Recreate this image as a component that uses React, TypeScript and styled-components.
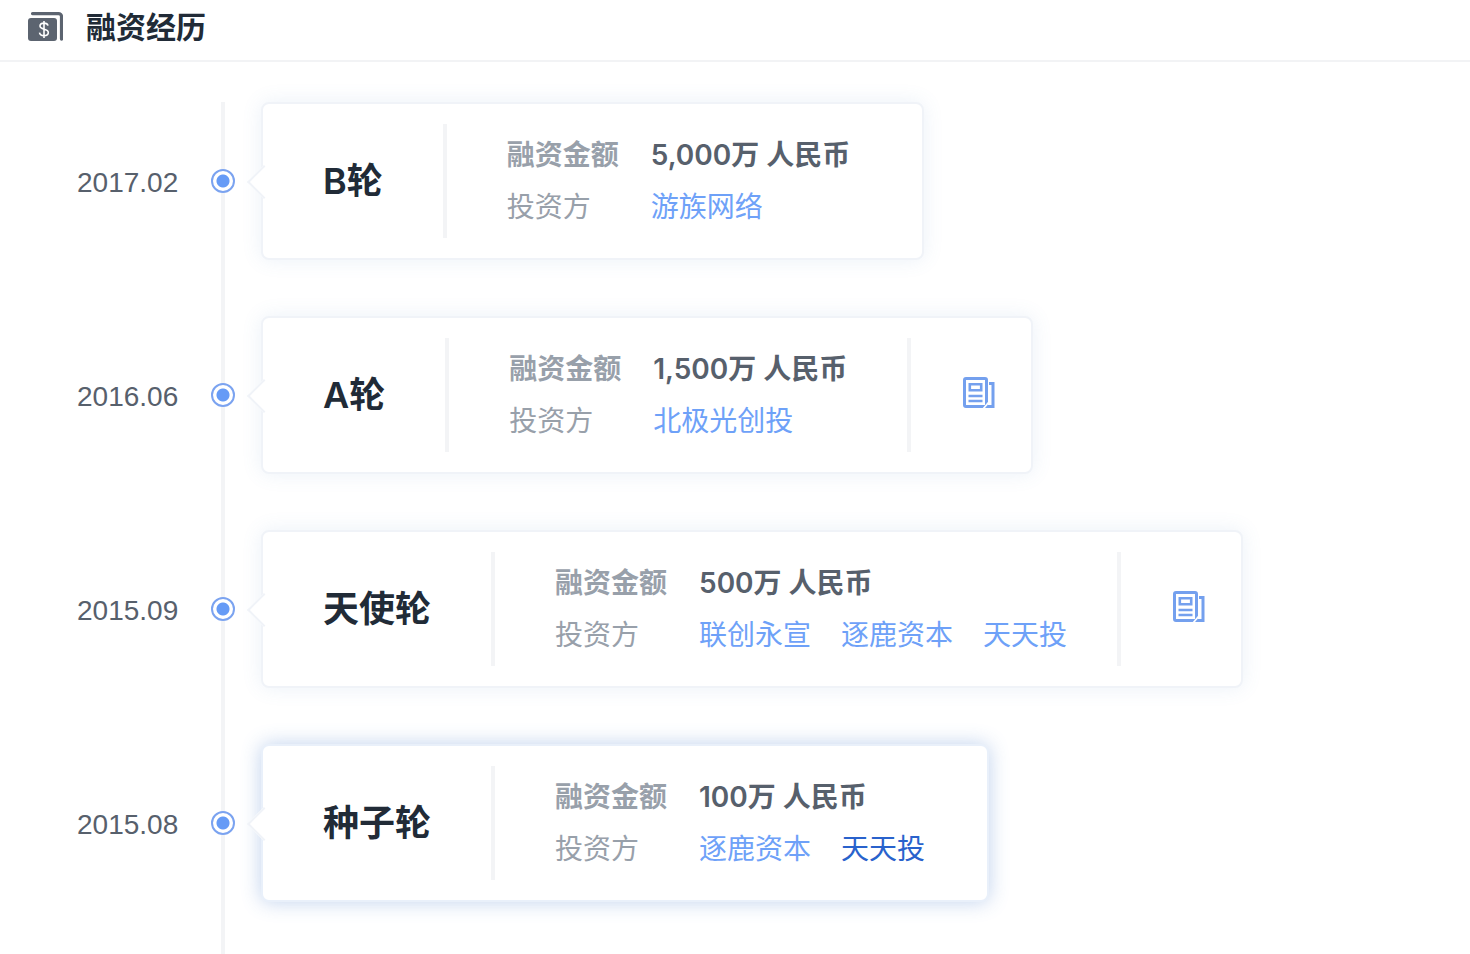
import React from "react";
import styled, { createGlobalStyle, css } from "styled-components";

const GlobalStyle = createGlobalStyle`
  * { box-sizing: border-box; }
  body {
    margin: 0;
    background: #fff;
    color: #57606c;
    font-family: Inter, "Noto Sans CJK SC", sans-serif;
    font-size: 28px;
    line-height: 52px;
  }
`;

const Header = styled.header`
  display: flex;
  align-items: center;
  gap: 23px;
  height: 62px;
  padding: 0 28px 6px;
  border-bottom: 2px solid #f2f3f5;
`;

const Title = styled.h1`
  margin: 0;
  color: #212b37;
  font-size: 30px;
  line-height: 44px;
  font-weight: 700;
`;

const Timeline = styled.ol`
  list-style: none;
  margin: 0;
  padding: 40px 0 0;
`;

const Round = styled.li`
  display: grid;
  grid-template-columns: 211px 24px auto;
  justify-content: start;
  padding-bottom: 56px;

  &:last-child {
    padding-bottom: 52px;
  }
`;

const RoundDate = styled.time`
  align-self: center;
  padding: 4px 0 0 77px;
  font-family: "Liberation Sans", Arial, sans-serif;
`;

const Rail = styled.div`
  display: flex;
  align-items: center;
  justify-content: center;
  margin-bottom: -56px;
  padding-bottom: 56px;
  background: linear-gradient(#f3f4f6, #f3f4f6) center / 4px 100% no-repeat;

  ${Round}:last-child & {
    margin-bottom: -52px;
    padding-bottom: 52px;
  }
`;

const Dot = styled.span`
  width: 24px;
  height: 24px;
  border: 2px solid #7ba3f0;
  border-radius: 50%;
  background: radial-gradient(circle, #669bf6 0 6px, #fff 7px);
`;

const Card = styled.article<{ $active?: boolean }>`
  position: relative;
  display: flex;
  min-height: 158px;
  margin-left: 26px;
  padding: 20px 0 20px 60px;
  border: 2px solid #f0f3f8;
  border-radius: 8px;
  background: #fff;
  box-shadow: 0 0 20px rgba(90, 140, 200, 0.12);

  &::before {
    content: "";
    position: absolute;
    top: calc(50% - 11px);
    left: -11px;
    width: 22px;
    height: 22px;
    border: solid #f0f3f8;
    border-width: 0 0 2px 2px;
    background: #fff;
    transform: rotate(45deg);
  }

  ${(p) =>
    p.$active &&
    css`
      border-color: #e9f0fa;
      box-shadow: 0 0 20px rgba(60, 115, 200, 0.32);
    `}
`;

const Stage = styled.h2`
  display: flex;
  align-items: center;
  margin: 0;
  padding-right: 60px;
  color: #212b37;
  font-size: 36px;
  font-weight: 600;
  white-space: nowrap;
`;

const Details = styled.dl<{ $divided: boolean }>`
  display: grid;
  grid-template-columns: 144px auto;
  align-content: center;
  margin: 0;
  margin-right: ${(p) => (p.$divided ? 0 : 12)}px;
  padding-left: 60px;
  border-left: 4px solid #f3f4f6;
  white-space: nowrap;
`;

const Label = styled.dt<{ $strong?: boolean }>`
  color: #98a0aa;
  font-weight: ${(p) => (p.$strong ? 700 : 400)};
`;

const Amount = styled.dd`
  margin: 0;
  padding-right: 60px;
  font-weight: 600;
`;

const Investors = styled.dd`
  display: flex;
  gap: 30px;
  margin: 0;
  padding-right: 50px;
`;

const Investor = styled.a<{ $active?: boolean }>`
  color: ${(p) => (p.$active ? "#2962cc" : "#6ea1f8")};
  text-decoration: none;

  &:hover {
    color: #2962cc;
  }
`;

const NewsLink = styled.a`
  display: flex;
  align-items: center;
  padding: 0 35px 4px 51px;
  border-left: 4px solid #f3f4f6;
  color: #74a0ee;
`;

function MoneyIcon() {
  return (
    <svg width="35" height="30" viewBox="0 0 35 30" aria-hidden="true">
      <path d="M4.500 1.600h26a3 3 0 0 1 3 3v22.500" fill="none" stroke="#5c6470" strokeWidth="3.200" strokeLinecap="round" />
      <rect y="6" width="29" height="23" rx="3" fill="#5c6470" />
      <path d="M20 13.600c-.4-1.700-1.900-2.500-4-2.500-2.300 0-4 1.100-4 3 0 4.300 8.300 1.900 8.300 6.300 0 2-1.800 3.200-4.300 3.200-2.400 0-4.200-1-4.500-3M16 9v17" fill="none" stroke="#fff" strokeWidth="1.600" />
    </svg>
  );
}

function NewsIcon() {
  return (
    <svg width="34" height="34" viewBox="0 0 34 34" fill="none" stroke="currentColor" strokeWidth="3" aria-hidden="true">
      <rect x="2.500" y="2.500" width="22" height="28" rx="1.500" />
      <path d="M7.800 8.300h11.400v6H7.800zM6.500 20h14M6.500 25h14" strokeWidth="2.600" />
      <path d="M27 7.500h4V30.500H24" />
      <path d="M21 33l6-7" stroke="#fff" strokeWidth="1.800" />
    </svg>
  );
}

type Funding = {
  date: string;
  stage: string;
  amount: string;
  investors: string[];
  news?: boolean;
  activeInvestor?: string;
};

const fundings: Funding[] = [
  { date: "2017.02", stage: "B轮", amount: "5,000万 人民币", investors: ["游族网络"] },
  { date: "2016.06", stage: "A轮", amount: "1,500万 人民币", investors: ["北极光创投"], news: true },
  { date: "2015.09", stage: "天使轮", amount: "500万 人民币", investors: ["联创永宣", "逐鹿资本", "天天投"], news: true },
  { date: "2015.08", stage: "种子轮", amount: "100万 人民币", investors: ["逐鹿资本", "天天投"], activeInvestor: "天天投" },
];

export default function App() {
  return (
    <main lang="zh-CN">
      <GlobalStyle />
      <Header>
        <MoneyIcon />
        <Title>融资经历</Title>
      </Header>
      <Timeline>
        {fundings.map((f) => (
          <Round key={f.date}>
            <RoundDate>{f.date}</RoundDate>
            <Rail>
              <Dot />
            </Rail>
            <Card $active={Boolean(f.activeInvestor)}>
              <Stage>{f.stage}</Stage>
              <Details $divided={Boolean(f.news)}>
                <Label $strong>融资金额</Label>
                <Amount>{f.amount}</Amount>
                <Label>投资方</Label>
                <Investors>
                  {f.investors.map((name) => (
                    <Investor key={name} href="#" $active={name === f.activeInvestor}>
                      {name}
                    </Investor>
                  ))}
                </Investors>
              </Details>
              {f.news && (
                <NewsLink href="#" aria-label="新闻报道">
                  <NewsIcon />
                </NewsLink>
              )}
            </Card>
          </Round>
        ))}
      </Timeline>
    </main>
  );
}
